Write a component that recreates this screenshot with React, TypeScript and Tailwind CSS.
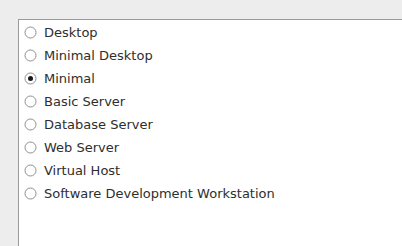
const options = [
  "Desktop",
  "Minimal Desktop",
  "Minimal",
  "Basic Server",
  "Database Server",
  "Web Server",
  "Virtual Host",
  "Software Development Workstation",
];

function Radio({ checked }: { checked: boolean }) {
  return (
    <svg width="13" height="13" viewBox="0 0 13 13" className="shrink-0">
      <circle cx="6.5" cy="6.5" r="5.5" fill="#fff" stroke="#8f8f8f" strokeWidth="1" />
      {checked && <circle cx="6.5" cy="6.5" r="2.5" fill="#1a1a1a" />}
    </svg>
  );
}

export default function App() {
  return (
    <div className="w-[402px] h-[246px] bg-[#ededed] pl-[18px] pt-[19px] overflow-hidden font-['DejaVu_Sans',sans-serif]">
      <div className="h-full bg-white border-l border-t border-[#9a9a9a] pt-[1px]">
        {options.map((o) => (
          <div key={o} className="flex items-center h-[23px] pl-[5px] gap-[7px] text-[13px] text-[#2e2e2e]">
            <Radio checked={o === "Minimal"} />
            <span>{o}</span>
          </div>
        ))}
      </div>
    </div>
  );
}
